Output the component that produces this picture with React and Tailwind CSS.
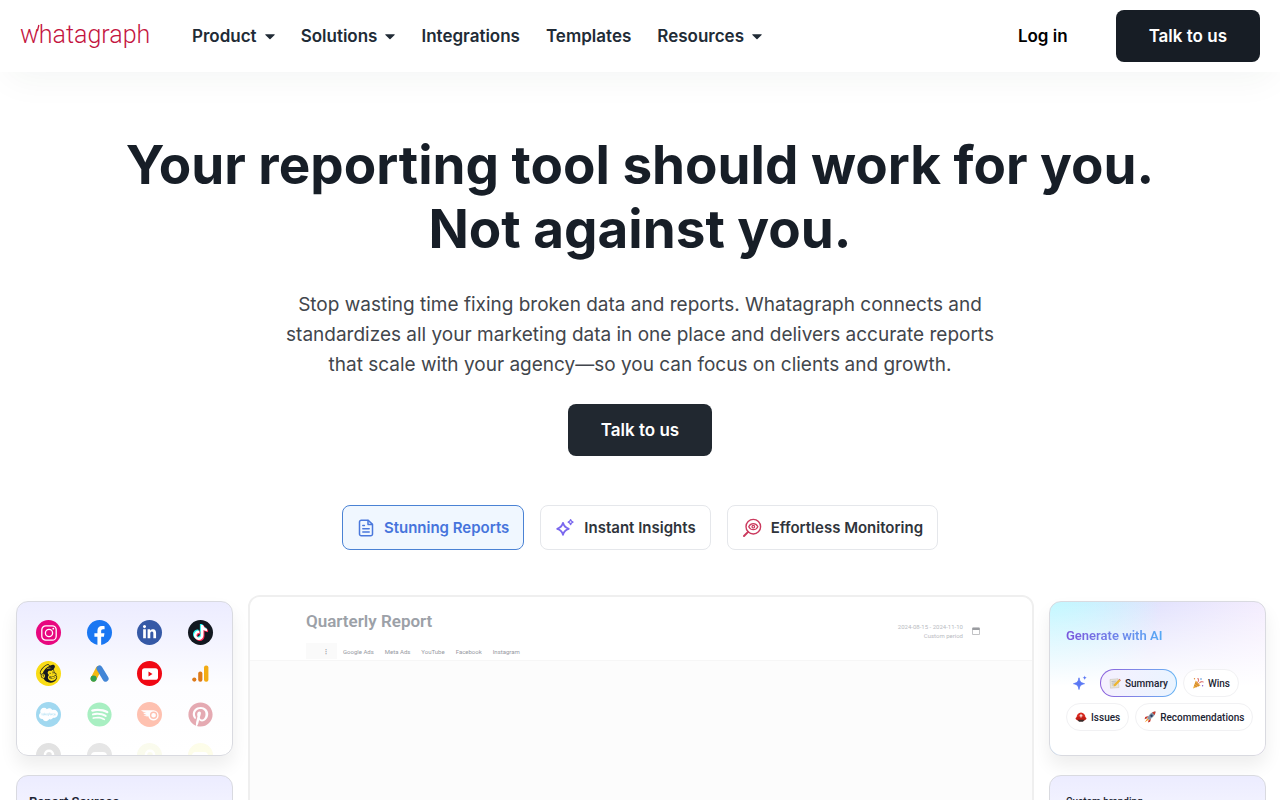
import React, { useState } from 'react';
import {
  FaFacebookF,
  FaLinkedinIn,
  FaTiktok,
  FaMailchimp,
  FaSalesforce,
  FaSpotify,
  FaPinterest,
} from 'react-icons/fa';

const NAV = [
  { label: 'Product', menu: true },
  { label: 'Solutions', menu: true },
  { label: 'Integrations' },
  { label: 'Templates' },
  { label: 'Resources', menu: true },
];

function Caret() {
  return (
    <svg viewBox="0 0 10 6" className="w-[10px] h-[6px] fill-current" aria-hidden="true">
      <path d="M0.8 0.3h8.4c.5 0 .7.5.4.8L5.5 5.1a.7.7 0 0 1-1 0L.4 1.1C.1.8.3.3.8.3z" />
    </svg>
  );
}

function Logo() {
  return (
    <a href="#" className="relative flex w-[172px] pb-0.5 font-[Roboto,sans-serif] text-[25px] leading-9 font-light text-[#c4153f]">
      whatagraph
      {/* Raised tail of the wordmark */}
      <svg viewBox="0 0 20 36" className="absolute left-0 top-0 w-5 h-9" stroke="currentColor" strokeWidth="1.3" aria-hidden="true">
        <path d="M17.400 14L18.900 8" />
      </svg>
    </a>
  );
}

function Header() {
  return (
    <header className="relative z-10 flex items-center h-18 px-5 bg-white shadow-[0_14px_36px_-8px_rgba(20,50,40,0.05)]">
      <Logo />
      <nav className="flex items-center gap-[26px] pt-0.5 text-[17px] font-semibold text-[#212b36]">
        {NAV.map((item) =>
          item.menu ? (
            <button key={item.label} type="button" className="flex items-center gap-2">
              {item.label}
              <Caret />
            </button>
          ) : (
            <a key={item.label} href="#">
              {item.label}
            </a>
          )
        )}
      </nav>
      <div className="flex items-center gap-12 ml-auto text-[17px] font-semibold">
        <a href="#" className="pt-0.5 text-black">
          Log in
        </a>
        <button type="button" className="px-[33px] pt-0.5 rounded-lg h-13 bg-[#171d25] text-white">
          Talk to us
        </button>
      </div>
    </header>
  );
}

/* Tab icons */
function ReportIcon() {
  return (
    <svg viewBox="0 0 18 18" className="w-[18px] h-[18px]" fill="none" stroke="#4a78dc" strokeWidth="1.5" strokeLinecap="round" strokeLinejoin="round" aria-hidden="true">
      <path d="M11.2 1.2H4.3a1.8 1.8 0 0 0-1.8 1.8v12a1.8 1.8 0 0 0 1.8 1.8h9.400a1.800 1.800 0 0 0 1.800-1.800V5.400z" />
      <path d="M11 1.4v4.1h4.2M5.8 6.400h1.600M5.800 9.700h6.400M5.800 12.900h6.400" />
    </svg>
  );
}

function SparkIcon() {
  return (
    <svg viewBox="0 0 20 20" className="w-5 h-5" fill="none" stroke="#7a68ee" strokeWidth="1.8" strokeLinejoin="round" aria-hidden="true">
      <path d="M8 4.800c.8 3.600 2 4.800 5.800 6-3.800 1.200-5 2.400-5.800 6-.8-3.600-2-4.800-5.800-6 3.800-1.200 5-2.400 5.800-6z" />
      <path d="M15.600 1.600c.4 1.500.9 2 2.400 2.500-1.500.4-2 .9-2.400 2.400-.4-1.500-.9-2-2.400-2.400 1.500-.5 2-1 2.400-2.500z" strokeWidth="1.4" />
    </svg>
  );
}

function MonitorIcon() {
  return (
    <svg viewBox="0 0 20 20" className="w-5 h-5" fill="none" stroke="#cb3a5e" strokeWidth="1.4" strokeLinecap="round" aria-hidden="true">
      <circle cx="11.3" cy="8.700" r="7.300" />
      <path d="M6.100 13.900L2 18" strokeWidth="2" />
      <path d="M6.700 8.700c1.100-2 2.700-3 4.600-3s3.500 1 4.600 3c-1.100 2-2.700 3-4.600 3s-3.500-1-4.600-3z" strokeWidth="1.2" />
      <circle cx="11.300" cy="8.700" r="1.300" strokeWidth="1.2" />
    </svg>
  );
}

const TABS = [
  { label: 'Stunning Reports', Icon: ReportIcon },
  { label: 'Instant Insights', Icon: SparkIcon },
  { label: 'Effortless Monitoring', Icon: MonitorIcon },
];

function Tabs() {
  const [active, setActive] = useState(0);
  return (
    <div className="flex flex-wrap justify-center gap-4 mt-[49px]">
      {TABS.map(({ label, Icon }, i) => (
        <button
          key={label}
          type="button"
          onClick={() => setActive(i)}
          className={`flex items-center gap-[9px] h-[45px] px-3.5 rounded-lg border text-[15px] font-semibold ${
            i === active
              ? 'border-[#4a82d4] bg-[#f0f7ff] text-[#4674dc]'
              : 'border-[#e5e7eb] bg-white text-[#2f343b]'
          }`}
        >
          <Icon />
          <span className="pt-px">{label}</span>
        </button>
      ))}
    </div>
  );
}

/* Source logos */
function Disc({ color, children }) {
  return (
    <span className="flex items-center justify-center rounded-full size-[25px] text-white" style={{ backgroundColor: color }}>
      {children}
    </span>
  );
}

function Instagram() {
  return (
    <svg viewBox="0 0 16 16" className="size-4" fill="none" stroke="#fff" strokeWidth="1.3" aria-hidden="true">
      <rect x="0.8" y="0.8" width="14.4" height="14.4" rx="4" />
      <circle cx="8" cy="8" r="3.6" />
      <circle cx="12.3" cy="3.7" r="0.9" fill="#fff" stroke="none" />
    </svg>
  );
}

function TikTok() {
  return (
    <span className="relative size-[15px]">
      <FaTiktok className="absolute size-[15px] -left-px -top-px text-[#25f4ee]" />
      <FaTiktok className="absolute size-[15px] left-px top-px text-[#fe2c55]" />
      <FaTiktok className="absolute size-[15px] text-white" />
    </span>
  );
}

function GoogleAds() {
  return (
    <svg viewBox="0 0 25 25" className="size-[25px]" strokeWidth="6" strokeLinecap="round" aria-hidden="true">
      <path d="M11.700 7.800L6.700 17.500" stroke="#f4b912" />
      <path d="M12.500 7.500L18.600 17.600" stroke="#4285d6" />
      <circle cx="6.600" cy="17.600" r="3.100" fill="#34a04f" />
    </svg>
  );
}

function YouTube() {
  return (
    <svg viewBox="0 0 16 12" className="w-4 h-3" aria-hidden="true">
      <rect width="16" height="11.6" y="0.2" rx="2.6" fill="#fff" />
      <path d="M6.500 3.500v5l4-2.500z" fill="#f00814" />
    </svg>
  );
}

function Analytics() {
  return (
    <svg viewBox="0 0 25 25" className="size-[25px]" aria-hidden="true">
      <circle cx="6.300" cy="18.600" r="2.100" fill="#dd7a1a" />
      <rect x="10.200" y="10.500" width="4.200" height="10.200" rx="2" fill="#dd7a1a" />
      <rect x="16" y="4.500" width="4.400" height="16.200" rx="2" fill="#f2ab14" />
    </svg>
  );
}

function Semrush() {
  return (
    <svg viewBox="0 0 20 14" className="w-5 h-3.5" aria-hidden="true">
      <path d="M1 2.200h12.500a5.200 5.200 0 1 1-5.200 6.100C6.500 8.600 4.600 8 3.500 7.300l3.300-.1C4.800 6.300 3.500 5.500 3 4.700l3.300.2C4 4 2 3.200 1 2.200z" fill="#fff" />
      <circle cx="13.600" cy="7.300" r="3" fill="none" stroke="#ff5f33" strokeWidth="1.4" />
    </svg>
  );
}

function Arc() {
  return (
    <svg viewBox="0 0 16 16" className="size-4" fill="none" stroke="#fff" strokeWidth="2.5" strokeLinecap="round" aria-hidden="true">
      <path d="M4 6.500a4 3.800 0 0 1 8 0c0 2-2 2.500-4 3.500" />
    </svg>
  );
}

function SourcesCard() {
  return (
    <div className="h-[155px] overflow-hidden rounded-xl border border-[#d9dae0] bg-linear-to-b from-[#ececff] via-[#fdfdff] via-55% to-white px-[19px] pt-[18px] shadow-[0_10px_18px_rgba(0,0,0,0.07)]">
      <div className="flex flex-col gap-4">
        <div className="flex justify-between">
          <Disc color="#e8077f"><Instagram /></Disc>
          <Disc color="#1a77f2"><FaFacebookF className="size-[19px] translate-y-[3px]" /></Disc>
          <Disc color="#3559a6"><FaLinkedinIn className="size-[15px]" /></Disc>
          <Disc color="#121820"><TikTok /></Disc>
        </div>
        <div className="flex justify-between">
          <Disc color="#f9dc16"><FaMailchimp className="size-[21px] text-[#15191f]" /></Disc>
          <GoogleAds />
          <Disc color="#f00814"><YouTube /></Disc>
          <Analytics />
        </div>
        <div className="flex justify-between opacity-38">
          <Disc color="#0d9dda"><FaSalesforce className="size-[19px]" /></Disc>
          <span className="flex rounded-full size-[25px] bg-white text-[#1ed760]"><FaSpotify className="size-[25px]" /></span>
          <Disc color="#ff5f33"><Semrush /></Disc>
          <span className="flex rounded-full size-[25px] bg-white text-[#bd2438]"><FaPinterest className="size-[25px]" /></span>
        </div>
        <div className="flex justify-between opacity-12">
          <Disc color="#111111"><Arc /></Disc>
          <Disc color="#333333"><span className="w-4 h-2 bg-white rounded-sm" /></Disc>
          <Disc color="#d7dd6a"><Arc /></Disc>
          <Disc color="#efe84e"><span className="w-4 h-2 bg-white rounded-sm" /></Disc>
        </div>
      </div>
    </div>
  );
}

/* Small pictograms used inside the AI chips */
function Memo() {
  return (
    <svg viewBox="0 0 12 12" className="size-3" aria-hidden="true">
      <path d="M1 2.500l8-.8 1 8.800-8.500.7z" fill="#e8e4da" stroke="#b9b3a6" strokeWidth=".4" />
      <path d="M2.500 4.500l5-.4M2.700 6.200l4-.3M2.900 8l3-.2" stroke="#9a9ea6" strokeWidth=".6" />
      <path d="M4.500 9.500l.4-2 4.800-5 1.700 1.500-4.900 4.900z" fill="#eeb52e" />
      <path d="M9.700 2.500l1.700 1.500.5-.8-1.500-1.400z" fill="#d86a62" />
    </svg>
  );
}

function Popper() {
  return (
    <svg viewBox="0 0 12 12" className="size-3" aria-hidden="true">
      <path d="M1 11.500L3.800 3.500l4.700 5z" fill="#e9ad3c" />
      <path d="M2.200 8l2.600 2M3 5.800l4 3.400" stroke="#c46b2c" strokeWidth=".8" />
      <path d="M5.500 5.500C7 4 6.500 2.500 5.800 1M6.800 6.500c1.500-2 3-2 4.700-1.500" fill="none" stroke="#d6534f" strokeWidth="1" />
      <circle cx="9" cy="2" r=".8" fill="#4c90d9" />
      <circle cx="2.5" cy="1.8" r=".7" fill="#e38b2f" />
      <circle cx="10.6" cy="8.8" r=".7" fill="#8a63cf" />
    </svg>
  );
}

function Helmet() {
  return (
    <svg viewBox="0 0 12 12" className="size-3" aria-hidden="true">
      <path d="M1.500 7a4.500 5.500 0 0 1 9 0z" fill="#d92a20" />
      <ellipse cx="6" cy="7.600" rx="5.500" ry="2.200" fill="#c41d15" />
      <path d="M2.500 8.800h7l-1.500 2H4z" fill="#3a2a28" />
      <path d="M6 3v3.600M4.500 4.800h3" stroke="#fff" strokeWidth=".9" />
    </svg>
  );
}

function Rocket() {
  return (
    <svg viewBox="0 0 12 12" className="size-3" aria-hidden="true">
      <path d="M4 5L1.200 6l-.6 2.200 2.700-.9zM7 8l-.9 2.800-2.200.7.800-2.800z" fill="#c93a2c" />
      <path d="M11.500.5C8.500.6 5.500 2.500 3.200 7.200l1.700 1.700C9.500 6.600 11.300 3.600 11.500.5z" fill="#8796a6" />
      <path d="M11.500.5c-1.200 0-2.300.3-3.400.9l2.500 2.500c.6-1.100.8-2.200.9-3.400z" fill="#c93a2c" />
      <circle cx="7.5" cy="4.7" r="1.2" fill="#253b63" />
      <path d="M3.300 7.500L.8 11.300l3.800-2.500z" fill="#f39a22" />
    </svg>
  );
}

function Chip({ icon, label }) {
  return (
    <button type="button" className="flex items-center gap-1 h-7 px-2 rounded-full border border-[#f1f1f3] bg-white">
      {icon}
      {label}
    </button>
  );
}

function AiCard() {
  return (
    <div className="h-[155px] rounded-xl border border-[#d9dae0] bg-[radial-gradient(circle_at_0%_0%,#c3f8ff_0%,#c3f8ff00_42%),linear-gradient(100deg,#cdebff_0%,#e3e3fd_45%,#f8effe_100%)] shadow-[0_10px_18px_rgba(0,0,0,0.07)] font-[Roboto,sans-serif]">
      <div className="h-full px-4 pt-6 rounded-xl bg-linear-to-b from-white/0 to-white to-55%">
        <h2 className="bg-linear-to-r from-[#7a55dc] to-[#55a9f5] bg-clip-text text-[13px] leading-5 font-semibold text-transparent w-fit">
          Generate with AI
        </h2>
        <div className="flex flex-col gap-1.5 mt-[23px] text-[10px] font-medium text-[#1c2433]">
          <div className="flex items-center gap-1.5">
            <svg viewBox="0 0 16 16" className="w-4 h-4 mx-1.5" fill="#5b78f4" aria-hidden="true">
              <path d="M7 2.800c.8 4 1.600 4.900 5.500 5.900-3.900 1-4.700 1.800-5.500 5.800-.8-4-1.600-4.800-5.500-5.800C5.400 7.700 6.200 6.800 7 2.800z" stroke="#5b78f4" strokeWidth=".8" />
              <path d="M12.700.5c.3 1.500.7 1.900 2.200 2.200-1.500.4-1.900.8-2.200 2.300-.3-1.500-.7-1.900-2.200-2.300 1.500-.3 1.900-.7 2.200-2.200z" />
            </svg>
            <div className="p-px rounded-full bg-linear-to-r from-[#8b5ddb] to-[#62b4f4]">
              <button type="button" className="flex items-center gap-1 h-[26px] px-2 rounded-full bg-linear-to-r from-[#f5f0fe] to-[#eaf4ff]">
                <Memo />
                Summary
              </button>
            </div>
            <Chip icon={<Popper />} label="Wins" />
          </div>
          <div className="flex gap-1.5">
            <Chip icon={<Helmet />} label="Issues" />
            <Chip icon={<Rocket />} label="Recommendations" />
          </div>
        </div>
      </div>
    </div>
  );
}

function TitleCard({ title, className }) {
  return (
    <div className={`h-[155px] rounded-xl border border-[#d9dae0] bg-linear-to-b from-[#ececff] to-white to-55% font-[Roboto,sans-serif] text-[#1c2433] ${className}`}>
      <h2>{title}</h2>
    </div>
  );
}

function ReportPanel() {
  return (
    <div className="flex-1 min-w-0 h-[480px] overflow-hidden rounded-xl border-2 border-[#efefef] bg-[#fcfcfc] font-[Roboto,sans-serif]">
      <div className="flex justify-between h-16 pl-14 pr-[52px] border-b border-[#f6f6f6] bg-white">
        <div className="flex flex-col justify-between pt-3">
          <h2 className="text-[17px] leading-6 font-semibold text-[#9ca1a8]">Quarterly Report</h2>
          <div className="flex items-center h-[17px] pb-px text-[6px] text-[#96999f]">
            <span className="w-[31px] pr-2 text-right leading-4 font-bold bg-[#fafafa]">⋮</span>
            <a href="#" className="pl-1.5 pr-[5px]">Google Ads</a>
            <a href="#" className="pl-1.5 pr-[5px]">Meta Ads</a>
            <a href="#" className="pl-1.5 pr-[5px]">YouTube</a>
            <a href="#" className="pl-1.5 pr-[5px]">Facebook</a>
            <a href="#" className="pl-1.5 pr-[5px]">Instagram</a>
          </div>
        </div>
        <div className="flex items-center gap-[9px] pt-1">
          <p className="text-right text-[6px] leading-[9px] text-[#b9bbbf]">
            2024-08-15 - 2024-11-10
            <br />
            Custom period
          </p>
          <svg viewBox="0 0 8 8" className="size-2" aria-hidden="true">
            <rect x=".4" y=".9" width="7.200" height="6.700" rx=".6" fill="#fff" stroke="#a9abae" strokeWidth=".8" />
            <path d="M.4.800h7.200v2.200H.4z" fill="#9a9ca0" />
          </svg>
        </div>
      </div>
    </div>
  );
}

export default function App() {
  return (
    <div className="h-screen overflow-hidden bg-white font-['Inter',sans-serif]">
      <Header />
      <main className="flex flex-col">
        <h1 className="mt-[61px] text-center text-[53px] leading-16 font-bold text-[#171e27]">
          Your reporting tool should work for you.
          <br />
          Not against you.
        </h1>
        <p className="mt-[29px] text-center text-[19px] leading-[30px] text-[#42464c]">
          Stop wasting time fixing broken data and reports. Whatagraph connects and
          <br />
          standardizes all your marketing data in one place and delivers accurate reports
          <br />
          that scale with your agency—so you can focus on clients and growth.
        </p>
        <button type="button" className="self-center px-[33px] pt-0.5 mt-6 rounded-lg h-13 bg-[#212830] text-[17px] font-semibold text-white">
          Talk to us
        </button>
        <Tabs />
        <section className="flex gap-[15px] mt-[45px] pl-4 pr-3.5">
          <div className="flex flex-col gap-[19px] w-[217px] pt-1.5">
            <SourcesCard />
            <TitleCard title="Report Sources" className="px-3 pt-4 text-[13px] leading-5 font-semibold" />
          </div>
          <ReportPanel />
          <div className="flex flex-col gap-[19px] w-[217px] pt-1.5">
            <AiCard />
            <TitleCard title="Custom branding" className="px-4 pt-4 text-[10px] leading-5 font-medium" />
          </div>
        </section>
      </main>
    </div>
  );
}
